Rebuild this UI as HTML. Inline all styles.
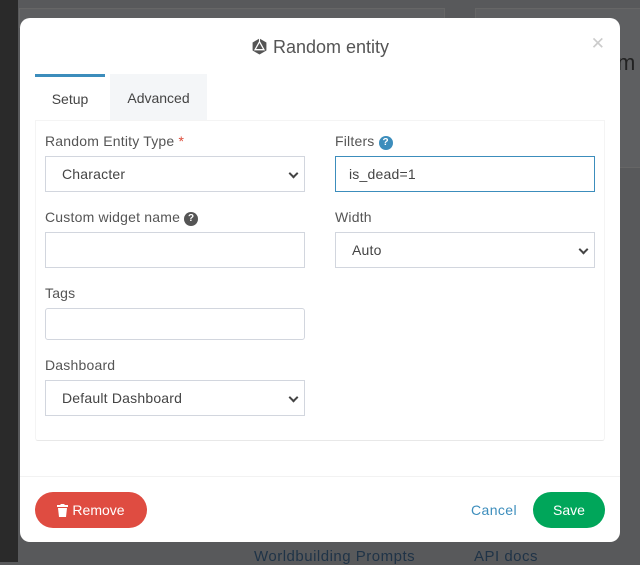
<!DOCTYPE html>
<html><head><style>
*{box-sizing:border-box;margin:0;padding:0}
body{width:640px;height:562px;background:#58595b;font-family:"Liberation Sans",sans-serif;position:relative;overflow:hidden;color:#555}
.strip{position:absolute;left:0;top:0;width:18px;height:562px;background:#2a2a2a}
.bgp{position:absolute;background:#5e5f61;border:1px solid #666}
.bgt{position:absolute;color:#1f3347;font-size:15px;letter-spacing:.5px}
.modal{position:absolute;left:20px;top:18px;width:600px;height:524px;background:#fff;border-radius:10px}
.title{position:absolute;top:19px;left:0;width:600px;text-align:center;font-size:18px;color:#555}
.close{position:absolute;right:15px;top:16px;color:#ccc;font-size:17px}
.tab{position:absolute;top:56px;height:46px;font-size:14px;line-height:48px;text-align:center;color:#444}
.panel{position:absolute;left:15px;top:102px;width:570px;height:321px;border:1px solid #f4f4f4;border-bottom:1px solid #e8e8e8;border-radius:0 0 3px 3px}
.lbl{position:absolute;font-size:14px;color:#555;letter-spacing:.2px}
.inp{position:absolute;height:36px;border:1px solid #d2d6de;font-size:14px;color:#444;padding-left:16px;line-height:34px;letter-spacing:.2px}
.sel:after{content:"";position:absolute;right:7px;top:13px;width:5px;height:5px;border-right:2px solid #444;border-bottom:2px solid #444;transform:rotate(45deg)}
.q{display:inline-block;width:14px;height:14px;border-radius:50%;color:#fff;font-size:10px;line-height:14px;text-align:center;font-weight:bold;vertical-align:1px}
.btn{position:absolute;top:474px;height:36px;border-radius:18px;color:#fff;font-size:14px;line-height:36px;text-align:center}
</style></head><body>
<div class="strip"></div>
<div class="bgp" style="left:19px;top:8px;width:426px;height:20px"></div>
<div class="bgp" style="left:475px;top:8px;width:180px;height:160px"></div>
<div class="bgt" style="left:617px;top:50px;font-size:22px;color:#222">m</div>
<div class="bgt" style="left:254px;top:548px">Worldbuilding Prompts</div>
<div class="bgt" style="left:474px;top:548px">API docs</div>
<div class="modal">
 <div class="title"><svg width="17" height="17" viewBox="0 0 16 16" style="vertical-align:-2px;margin-right:5px"><polygon points="8,0.5 14.5,4.2 14.5,11.8 8,15.5 1.5,11.8 1.5,4.2" fill="#555"/><polygon points="8,3.5 12.2,11 3.8,11" fill="none" stroke="#fff" stroke-width="1.2"/><line x1="8" y1="3.5" x2="8" y2="0.5" stroke="#fff"/></svg>Random entity</div>
 <div class="close">✕</div>
 <div class="tab" style="left:15px;width:70px;border-top:3px solid #3c8dbc;line-height:45px">Setup</div>
 <div class="tab" style="left:90px;width:97px;background:#f4f6f8">Advanced</div>
 <div class="panel"></div>
 <div class="lbl" style="left:25px;top:115px">Random Entity Type <span style="color:#dd4b39">*</span></div>
 <div class="inp sel" style="left:25px;top:138px;width:260px">Character</div>
 <div class="lbl" style="left:315px;top:115px">Filters <span class="q" style="background:#3c8dbc">?</span></div>
 <div class="inp" style="left:315px;top:138px;width:260px;border-color:#3c8dbc;padding-left:13px">is_dead=1</div>
 <div class="lbl" style="left:25px;top:191px">Custom widget name <span class="q" style="background:#555">?</span></div>
 <div class="inp" style="left:25px;top:214px;width:260px"></div>
 <div class="lbl" style="left:315px;top:191px">Width</div>
 <div class="inp sel" style="left:315px;top:214px;width:260px">Auto</div>
 <div class="lbl" style="left:25px;top:267px">Tags</div>
 <div class="inp" style="left:25px;top:290px;width:260px;height:32px;border-radius:3px"></div>
 <div class="lbl" style="left:25px;top:339px">Dashboard</div>
 <div class="inp sel" style="left:25px;top:362px;width:260px">Default Dashboard</div>
 <div style="position:absolute;left:0;top:458px;width:600px;border-top:1px solid #f2f2f2"></div>
 <div class="btn" style="left:15px;width:112px;background:#df4c41"><svg width="11" height="13" viewBox="0 0 11 13" style="vertical-align:-2px;margin-right:4px"><rect x="0" y="1" width="11" height="2" fill="#fff"/><rect x="3.5" y="0" width="4" height="2" fill="#fff"/><path d="M1 4h9l-1 9h-7z" fill="#fff"/></svg>Remove</div>
 <div style="position:absolute;left:451px;top:474px;line-height:36px;font-size:14px;color:#3c8dbc;letter-spacing:.4px">Cancel</div>
 <div class="btn" style="left:513px;width:72px;background:#00a65a">Save</div>
</div>
</body></html>
